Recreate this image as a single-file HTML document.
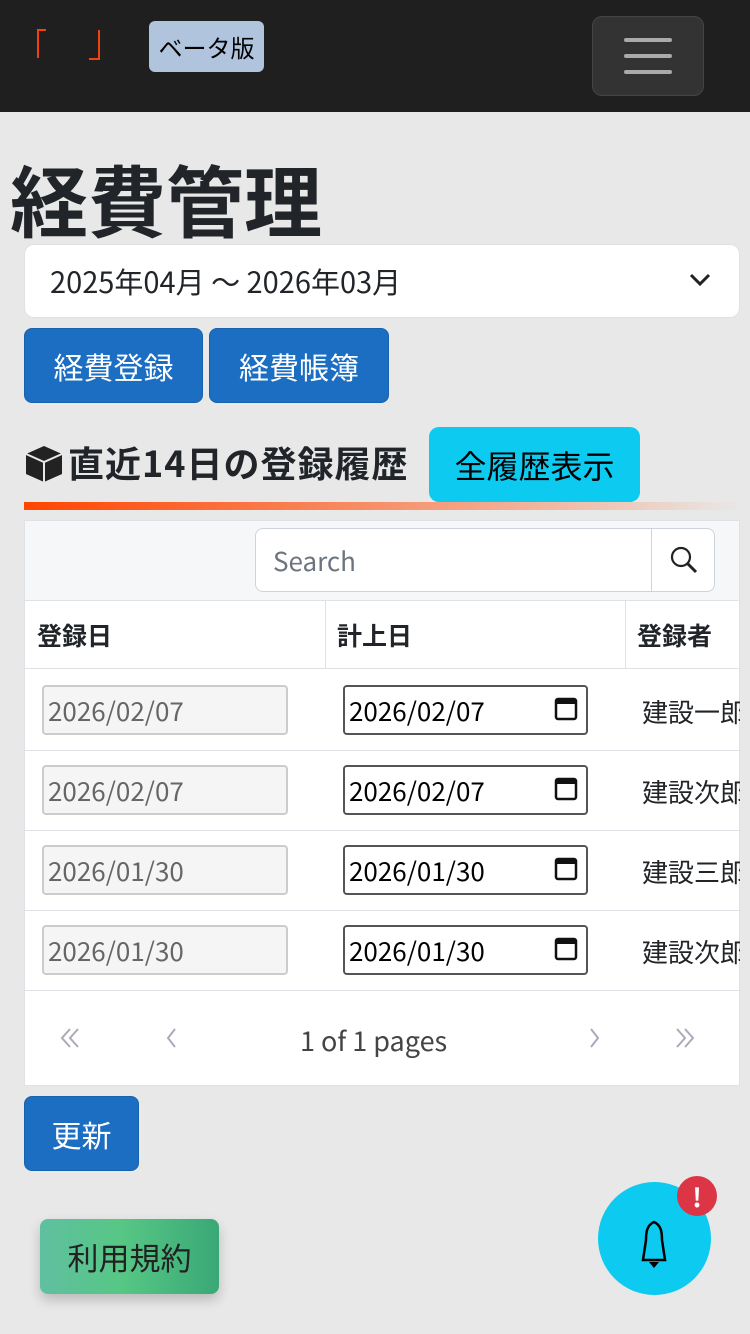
<!DOCTYPE html>
<html><head><meta charset="utf-8"><style>
*{box-sizing:border-box;margin:0;padding:0}
body{width:750px;height:1334px;background:#e8e8e8;font-family:"Noto Sans CJK JP","Liberation Sans",sans-serif;color:#212529;position:relative;overflow:hidden}
.abs{position:absolute}
.nav{left:0;top:0;width:750px;height:112px;background:#1f1f1f}
.btn{position:absolute;background:#1b6ec2;color:#fff;border-radius:8px;font-size:30px;display:flex;align-items:center;justify-content:center;border:1px solid #1861ac}
.cell{position:absolute;font-size:26px;display:flex;align-items:center;padding-left:4px}
.d1{background:#f5f5f5;border:2px solid #ccc;color:#666;border-radius:4px}
.d2{background:#fff;border:2px solid #555;color:#000;border-radius:4px}
.row{position:absolute;left:25px;width:715px;border-top:1px solid #dee2e6}
.nm{position:absolute;left:642px;font-size:26px;width:98px;overflow:hidden;white-space:nowrap;line-height:36px}
</style></head><body>
<div class="abs nav"></div>
<div class="abs" style="left:37px;top:29px;width:2px;height:29px;background:#f0430f"></div>
<div class="abs" style="left:37px;top:29px;width:9px;height:2px;background:#f0430f"></div>
<div class="abs" style="left:98px;top:30px;width:2px;height:30px;background:#f0430f"></div>
<div class="abs" style="left:89px;top:58px;width:11px;height:2px;background:#f0430f"></div>
<div class="abs" style="left:149px;top:21px;width:115px;height:51px;background:#b0c4de;border-radius:6px;font-size:24px;color:#000;display:flex;align-items:center;justify-content:center">ベータ版</div>
<div class="abs" style="left:592px;top:16px;width:112px;height:80px;background:#333;border:1px solid #444;border-radius:10px"></div>
<div class="abs" style="left:624px;top:38px;width:48px;height:4px;background:#aaa;border-radius:2px"></div>
<div class="abs" style="left:624px;top:54px;width:48px;height:4px;background:#aaa;border-radius:2px"></div>
<div class="abs" style="left:624px;top:70px;width:48px;height:4px;background:#aaa;border-radius:2px"></div>
<div class="abs" style="left:10px;top:148px;font-size:78px;font-weight:bold;line-height:100px">経費管理</div>
<div class="abs" style="left:24px;top:244px;width:716px;height:74px;background:#fff;border:1px solid #dee2e6;border-radius:10px;font-size:29px;padding-left:25px;display:flex;align-items:center">2025年04月 ～ 2026年03月</div>
<svg class="abs" style="left:688px;top:270px" width="24" height="20"><path d="M3 5 L12 14 L21 5" stroke="#222" stroke-width="3" fill="none"/></svg>
<div class="btn" style="left:24px;top:328px;width:179px;height:75px">経費登録</div>
<div class="btn" style="left:209px;top:328px;width:180px;height:75px">経費帳簿</div>
<svg class="abs" style="left:24px;top:444px" width="40" height="38"><path d="M20 2 L38 10 L38 30 L20 38 L2 30 L2 10 Z" fill="#222"/><path d="M2 10 L20 18 L38 10 M20 18 L20 38" stroke="#e8e8e8" stroke-width="2" fill="none"/></svg>
<div class="abs" style="left:68px;top:437px;font-size:36px;font-weight:bold;line-height:50px;letter-spacing:1px">直近14日の登録履歴</div>
<div class="abs" style="left:429px;top:427px;width:211px;height:75px;background:#0dcaf0;border-radius:10px;font-size:32px;color:#000;display:flex;align-items:center;justify-content:center">全履歴表示</div>
<div class="abs" style="left:24px;top:502px;width:716px;height:8px;background:linear-gradient(90deg,#ff4500,#f5a080 60%,#e8e8e8)"></div>
<div class="abs" style="left:24px;top:520px;width:716px;height:566px;background:#fff;border:1px solid #dee2e6"></div>
<div class="abs" style="left:25px;top:521px;width:714px;height:79px;background:#f6f7f9"></div>
<div class="abs" style="left:255px;top:528px;width:460px;height:64px;background:#fff;border:1px solid #ced4da;border-radius:8px"></div>
<div class="abs" style="left:651px;top:528px;width:1px;height:64px;background:#ced4da"></div>
<div class="abs" style="left:273px;top:541px;font-size:26px;color:#6c757d;line-height:40px">Search</div>
<svg class="abs" style="left:668px;top:544px" width="32" height="32"><circle cx="13" cy="13" r="9" stroke="#222" stroke-width="2.2" fill="none"/><path d="M19 19 L28 28" stroke="#222" stroke-width="3"/></svg>
<div class="row" style="top:600px;height:68px"></div>
<div class="abs" style="left:325px;top:600px;width:1px;height:68px;background:#dee2e6"></div>
<div class="abs" style="left:625px;top:600px;width:1px;height:68px;background:#dee2e6"></div>
<div class="abs" style="left:37px;top:616px;font-size:25px;font-weight:bold;line-height:38px">登録日</div>
<div class="abs" style="left:337px;top:616px;font-size:25px;font-weight:bold;line-height:38px">計上日</div>
<div class="abs" style="left:637px;top:616px;font-size:25px;font-weight:bold;white-space:nowrap;line-height:38px">登録者</div>
<div class="row" style="top:668px"></div>
<div class="cell d1" style="left:42px;top:685px;width:246px;height:50px">2026/02/07</div>
<div class="cell d2" style="left:343px;top:685px;width:245px;height:50px">2026/02/07</div>
<div class="nm" style="top:694px">建設一郎</div>
<div class="row" style="top:750px"></div>
<div class="cell d1" style="left:42px;top:765px;width:246px;height:50px">2026/02/07</div>
<div class="cell d2" style="left:343px;top:765px;width:245px;height:50px">2026/02/07</div>
<div class="nm" style="top:774px">建設次郎</div>
<div class="row" style="top:830px"></div>
<div class="cell d1" style="left:42px;top:845px;width:246px;height:50px">2026/01/30</div>
<div class="cell d2" style="left:343px;top:845px;width:245px;height:50px">2026/01/30</div>
<div class="nm" style="top:854px">建設三郎</div>
<div class="row" style="top:910px"></div>
<div class="cell d1" style="left:42px;top:925px;width:246px;height:50px">2026/01/30</div>
<div class="cell d2" style="left:343px;top:925px;width:245px;height:50px">2026/01/30</div>
<div class="nm" style="top:934px">建設次郎</div>
<div class="row" style="top:990px"></div>
<svg class="abs" style="left:553px;top:695px" width="30" height="380">
<g fill="none" stroke="#111" stroke-width="2.5"><rect x="3" y="4" width="20" height="20" rx="2"/><rect x="3" y="84" width="20" height="20" rx="2"/><rect x="3" y="164" width="20" height="20" rx="2"/><rect x="3" y="244" width="20" height="20" rx="2"/></g>
<g fill="#111"><rect x="3" y="4" width="20" height="5"/><rect x="3" y="84" width="20" height="5"/><rect x="3" y="164" width="20" height="5"/><rect x="3" y="244" width="20" height="5"/></g>
</svg>
<svg class="abs" style="left:58px;top:1025px" width="650" height="26"><g fill="none" stroke="#aab" stroke-width="2"><path d="M12 4 L4 13 L12 22 M20 4 L12 13 L20 22"/><path d="M117 4 L110 13 L117 22"/><path d="M533 4 L540 13 L533 22"/><path d="M619 4 L627 13 L619 22 M627 4 L635 13 L627 22"/></g></svg>
<div class="abs" style="left:300px;top:1020px;font-size:27px;color:#444;line-height:40px">1 of 1 pages</div>
<div class="btn" style="left:24px;top:1096px;width:115px;height:75px">更新</div>
<div class="abs" style="left:40px;top:1219px;width:179px;height:75px;border-radius:8px;background:linear-gradient(90deg,#5fbfa0,#57c785 45%,#3aa876);box-shadow:0 6px 12px rgba(0,0,0,.2);font-size:31px;color:#222;display:flex;align-items:center;justify-content:center">利用規約</div>
<div class="abs" style="left:598px;top:1182px;width:113px;height:113px;border-radius:50%;background:#0dcaf0"></div>
<svg class="abs" style="left:630px;top:1218px" width="50" height="52"><path d="M24 4 C17 7 16 14 16 22 L13 42 L35 42 L32 22 C32 14 31 7 24 4 Z" fill="none" stroke="#000" stroke-width="2.5"/><path d="M19 44 L29 44 L24 50 Z" fill="#000"/></svg>
<div class="abs" style="left:677px;top:1176px;width:40px;height:40px;border-radius:50%;background:#dc3545;color:#fff;font-weight:bold;font-size:26px;display:flex;align-items:center;justify-content:center">!</div>
</body></html>
